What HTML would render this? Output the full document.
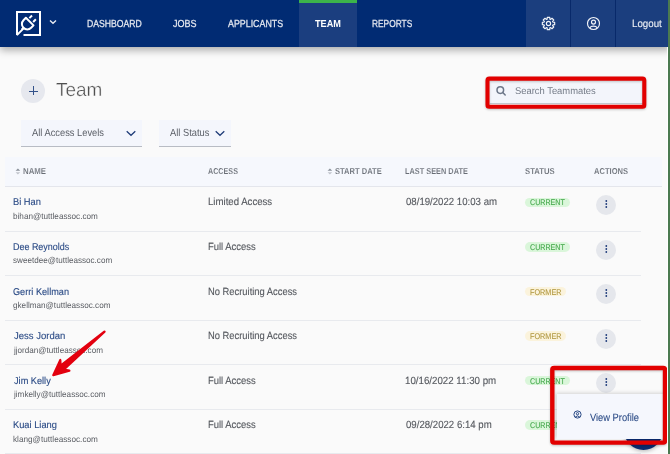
<!DOCTYPE html>
<html><head><meta charset="utf-8"><style>
html,body{margin:0;padding:0;}
body{width:670px;height:454px;overflow:hidden;position:relative;background:#fafafa;font-family:"Liberation Sans", sans-serif;text-rendering:geometricPrecision;}
.t{position:absolute;white-space:nowrap;}
.b{position:absolute;}
</style></head><body>
<div class="b" style="left:0px;top:0px;width:670px;height:46.5px;background:#012b73;box-shadow:0 3px 8px rgba(0,0,0,0.33);z-index:5"></div>
<div class="b" style="left:299px;top:0px;width:58px;height:46.5px;background:#1b3e7f;z-index:6"></div>
<div class="b" style="left:299px;top:0px;width:58px;height:2.5px;background:#3cb44a;z-index:7"></div>
<div class="b" style="left:526px;top:0px;width:144px;height:46.5px;background:#1b3e7e;z-index:6"></div>
<div class="b" style="left:570px;top:0px;width:1px;height:46.5px;background:#08296a;z-index:7"></div>
<div class="b" style="left:615px;top:0px;width:1px;height:46.5px;background:#08296a;z-index:7"></div>
<div class="t" style="left:87.09px;top:19.80px;font-size:10.2px;line-height:10.2px;color:#e6e9f0;font-weight:400;transform:scaleX(0.8483);transform-origin:0 0;-webkit-text-stroke:0.25px #e6e9f0;z-index:8;">DASHBOARD</div>
<div class="t" style="left:173.47px;top:19.80px;font-size:10.2px;line-height:10.2px;color:#e6e9f0;font-weight:400;transform:scaleX(0.8836);transform-origin:0 0;-webkit-text-stroke:0.25px #e6e9f0;z-index:8;">JOBS</div>
<div class="t" style="left:228.48px;top:19.80px;font-size:10.2px;line-height:10.2px;color:#e6e9f0;font-weight:400;transform:scaleX(0.8696);transform-origin:0 0;-webkit-text-stroke:0.25px #e6e9f0;z-index:8;">APPLICANTS</div>
<div class="t" style="left:315.41px;top:19.80px;font-size:10.2px;line-height:10.2px;color:#ffffff;font-weight:700;transform:scaleX(0.8993);transform-origin:0 0;z-index:8;">TEAM</div>
<div class="t" style="left:372.31px;top:19.80px;font-size:10.2px;line-height:10.2px;color:#e6e9f0;font-weight:400;transform:scaleX(0.8198);transform-origin:0 0;-webkit-text-stroke:0.25px #e6e9f0;z-index:8;">REPORTS</div>
<div class="t" style="left:631.8px;top:19.90px;font-size:10.4px;line-height:10.4px;color:#f0f2f6;font-weight:400;transform:scaleX(0.9356);transform-origin:0 0;-webkit-text-stroke:0.1px #f0f2f6;z-index:8;">Logout</div>
<svg class="b" style="left:15px;top:10px;z-index:8" width="27" height="27" viewBox="-1 -1 27 27" fill="none" stroke="#fff" stroke-width="2">
<path d="M7.5 24 H24 V1 H1 V24" stroke-linejoin="miter"/>
<path d="M1.4 23.6 L7.6 17.4" stroke-linecap="round"/>
<g transform="translate(11.3 13.0) rotate(45)">
<path d="M-5.4 -3.4 H5.4 V0 A5.4 5.4 0 0 1 -5.4 0 Z" stroke-linejoin="round"/>
<path d="M-2.7 -5.6 V-9.4 M2.7 -5.6 V-9.4" />
<path d="M0 5.4 V8"/>
</g>
</svg><svg class="b" style="left:49px;top:19px;z-index:8" width="8" height="6" viewBox="0 0 8 6" fill="none" stroke="#e8ebf2" stroke-width="1.4"><path d="M1 1.5 L4 4.3 L7 1.5"/></svg>
<svg class="b" style="left:541px;top:15.5px;z-index:8" width="15" height="15" viewBox="0 0 15 15" fill="none" stroke="#f2f4f8" stroke-width="1.15" stroke-linejoin="round">
<circle cx="7.5" cy="7.5" r="2.1"/>
<path d="M11.89 6.14 L13.67 6.25 L13.67 8.75 L11.89 8.86 L11.57 9.65 L12.75 10.98 L10.98 12.75 L9.65 11.57 L8.86 11.89 L8.75 13.67 L6.25 13.67 L6.14 11.89 L5.35 11.57 L4.02 12.75 L2.25 10.98 L3.43 9.65 L3.11 8.86 L1.33 8.75 L1.33 6.25 L3.11 6.14 L3.43 5.35 L2.25 4.02 L4.02 2.25 L5.35 3.43 L6.14 3.11 L6.25 1.33 L8.75 1.33 L8.86 3.11 L9.65 3.43 L10.98 2.25 L12.75 4.02 L11.57 5.35Z"/>
</svg><svg class="b" style="left:586px;top:15.6px;z-index:8" width="15" height="15" viewBox="0 0 15 15" fill="none" stroke="#f2f4f8" stroke-width="1.15">
<circle cx="7.5" cy="7.5" r="6"/><circle cx="7.5" cy="6.1" r="2"/><path d="M3.9 11.9 C4.8 9.6 10.2 9.6 11.1 11.9"/>
</svg><div class="b" style="left:21px;top:79px;width:24px;height:24px;border-radius:50%;background:#e6e8ee"></div>
<div class="b" style="left:29px;top:90.5px;width:8.6px;height:1px;background:#33528a"></div>
<div class="b" style="left:32.8px;top:86.2px;width:1px;height:8.6px;background:#33528a"></div>
<div class="t" style="left:55.88px;top:81.10px;font-size:19px;line-height:19px;color:#505050;font-weight:400;transform:scaleX(0.9977);transform-origin:0 0;-webkit-text-stroke:0.35px #fafafa;">Team</div>
<div class="b" style="left:489.5px;top:80.7px;width:153px;height:22.3px;background:#f3f5fb;border-bottom:1px solid #c3c7cf"></div>
<svg class="b" style="left:495px;top:84.5px" width="12" height="12" viewBox="0 0 12 12" fill="none" stroke="#6d7789" stroke-width="1.5"><circle cx="5.3" cy="5.1" r="3.3"/><path d="M7.7 7.5 L10.2 10" stroke-linecap="round"/></svg>
<div class="t" style="left:515.29px;top:87.10px;font-size:9.8px;line-height:9.8px;color:#757c88;font-weight:400;transform:scaleX(0.9586);transform-origin:0 0;">Search Teammates</div>
<svg class="b" style="left:0;top:0;z-index:20;filter:drop-shadow(0.5px 1px 1px rgba(0,0,0,0.22))" width="670" height="454"><rect x="487.5" y="78.6" width="156.8" height="28.1" rx="1.8" fill="none" stroke="#e20000" stroke-width="4.1"/><rect x="552.3" y="368" width="112.7" height="74.6" rx="1.8" fill="none" stroke="#e20000" stroke-width="4.4"/></svg>
<div class="b" style="left:21px;top:120px;width:121px;height:25.5px;background:#f4f6fc;border-bottom:1px solid #b8bcc4"></div>
<div class="t" style="left:32.08px;top:129.30px;font-size:10.3px;line-height:10.3px;color:#5c6068;font-weight:400;transform:scaleX(0.9055);transform-origin:0 0;">All Access Levels</div>
<svg class="b" style="left:125px;top:129px" width="12" height="9" viewBox="0 0 12 9" fill="none" stroke="#1f3c78" stroke-width="1.25"><path d="M1.7 2.3 L6 6.3 L10.3 2.3"/></svg>
<div class="b" style="left:159px;top:120px;width:72px;height:25.5px;background:#f4f6fc;border-bottom:1px solid #b8bcc4"></div>
<div class="t" style="left:170.38px;top:129.30px;font-size:10.3px;line-height:10.3px;color:#5c6068;font-weight:400;transform:scaleX(0.9045);transform-origin:0 0;">All Status</div>
<svg class="b" style="left:214.2px;top:129.2px" width="12" height="9" viewBox="0 0 12 9" fill="none" stroke="#1f3c78" stroke-width="1.25"><path d="M1.7 2.3 L6 6.3 L10.3 2.3"/></svg>
<div class="b" style="left:5px;top:157px;width:656.5px;height:29px;background:#f6f8fd;border-bottom:1px solid #e4e6ec"></div>
<svg class="b" style="left:15.3px;top:167.6px" width="6" height="7" viewBox="0 0 6 7"><path d="M0.6 2.7 L2.9 0.4 L5.2 2.7Z" fill="#8a9099"/><path d="M0.6 4.3 L2.9 6.6 L5.2 4.3Z" fill="#c0c4cb"/></svg>
<div class="t" style="left:23.18px;top:167.20px;font-size:8.6px;line-height:8.6px;color:#686d75;font-weight:700;transform:scaleX(0.913);transform-origin:0 0;-webkit-text-stroke:0.12px #f6f8fd;">NAME</div>
<div class="t" style="left:207.83px;top:167.20px;font-size:8.6px;line-height:8.6px;color:#686d75;font-weight:700;transform:scaleX(0.8358);transform-origin:0 0;-webkit-text-stroke:0.12px #f6f8fd;">ACCESS</div>
<svg class="b" style="left:326.8px;top:167.6px" width="6" height="7" viewBox="0 0 6 7"><path d="M0.6 2.7 L2.9 0.4 L5.2 2.7Z" fill="#8a9099"/><path d="M0.6 4.3 L2.9 6.6 L5.2 4.3Z" fill="#c0c4cb"/></svg>
<div class="t" style="left:334.69px;top:167.20px;font-size:8.6px;line-height:8.6px;color:#686d75;font-weight:700;transform:scaleX(0.88);transform-origin:0 0;-webkit-text-stroke:0.12px #f6f8fd;">START DATE</div>
<div class="t" style="left:405.21px;top:167.20px;font-size:8.6px;line-height:8.6px;color:#686d75;font-weight:700;transform:scaleX(0.8564);transform-origin:0 0;-webkit-text-stroke:0.12px #f6f8fd;">LAST SEEN DATE</div>
<div class="t" style="left:524.78px;top:167.20px;font-size:8.6px;line-height:8.6px;color:#686d75;font-weight:700;transform:scaleX(0.8973);transform-origin:0 0;-webkit-text-stroke:0.12px #f6f8fd;">STATUS</div>
<div class="t" style="left:593.62px;top:167.20px;font-size:8.6px;line-height:8.6px;color:#686d75;font-weight:700;transform:scaleX(0.8803);transform-origin:0 0;-webkit-text-stroke:0.12px #f6f8fd;">ACTIONS</div>
<div class="t" style="left:12.99px;top:198.40px;font-size:9.9px;line-height:9.9px;color:#2a4a85;font-weight:400;transform:scaleX(0.9436);transform-origin:0 0;-webkit-text-stroke:0.12px #2a4a85;">Bi Han</div>
<div class="t" style="left:13.18px;top:211.90px;font-size:8.5px;line-height:8.5px;color:#5a5d63;font-weight:400;transform:scaleX(0.959);transform-origin:0 0;">bihan@tuttleassoc.com</div>
<div class="t" style="left:207.71px;top:198.40px;font-size:10.4px;line-height:10.4px;color:#55585e;font-weight:400;transform:scaleX(0.926);transform-origin:0 0;-webkit-text-stroke:0.12px #55585e;">Limited Access</div>
<div class="t" style="left:405.53px;top:198.40px;font-size:10.4px;line-height:10.4px;color:#55585e;font-weight:400;transform:scaleX(0.9266);transform-origin:0 0;-webkit-text-stroke:0.12px #55585e;">08/19/2022 10:03 am</div>
<div class="b" style="left:524.5px;top:197.6px;width:45.8px;height:9.4px;border-radius:5px;background:#daf6da"></div>
<div class="t" style="left:529.94px;top:198.40px;font-size:8.4px;line-height:8.4px;color:#45a84c;font-weight:400;transform:scaleX(0.8503);transform-origin:0 0;-webkit-text-stroke:0.12px #45a84c;">CURRENT</div>
<div class="b" style="left:596.3px;top:195.1px;width:20px;height:20px;border-radius:50%;background:#e5e7ec"></div>
<svg class="b" style="left:602px;top:198.20px" width="9" height="12" viewBox="0 0 9 12"><circle cx="4.3" cy="3.0" r="0.9" fill="#1d3a7a"/><circle cx="4.3" cy="6.0" r="0.9" fill="#1d3a7a"/><circle cx="4.3" cy="9.0" r="0.9" fill="#1d3a7a"/></svg>
<div class="b" style="left:5px;top:231px;width:636px;height:1px;background:#e8eaee"></div>
<div class="t" style="left:13.02px;top:242.95px;font-size:9.9px;line-height:9.9px;color:#2a4a85;font-weight:400;transform:scaleX(0.9059);transform-origin:0 0;-webkit-text-stroke:0.12px #2a4a85;">Dee Reynolds</div>
<div class="t" style="left:13.49px;top:256.45px;font-size:8.5px;line-height:8.5px;color:#5a5d63;font-weight:400;transform:scaleX(0.9526);transform-origin:0 0;">sweetdee@tuttleassoc.com</div>
<div class="t" style="left:207.72px;top:242.95px;font-size:10.4px;line-height:10.4px;color:#55585e;font-weight:400;transform:scaleX(0.909);transform-origin:0 0;-webkit-text-stroke:0.12px #55585e;">Full Access</div>
<div class="b" style="left:524.5px;top:242.15px;width:45.8px;height:9.4px;border-radius:5px;background:#daf6da"></div>
<div class="t" style="left:529.94px;top:242.95px;font-size:8.4px;line-height:8.4px;color:#45a84c;font-weight:400;transform:scaleX(0.8503);transform-origin:0 0;-webkit-text-stroke:0.12px #45a84c;">CURRENT</div>
<div class="b" style="left:596.3px;top:239.65px;width:20px;height:20px;border-radius:50%;background:#e5e7ec"></div>
<svg class="b" style="left:602px;top:242.75px" width="9" height="12" viewBox="0 0 9 12"><circle cx="4.3" cy="3.0" r="0.9" fill="#1d3a7a"/><circle cx="4.3" cy="6.0" r="0.9" fill="#1d3a7a"/><circle cx="4.3" cy="9.0" r="0.9" fill="#1d3a7a"/></svg>
<div class="b" style="left:5px;top:275px;width:636px;height:1px;background:#e8eaee"></div>
<div class="t" style="left:13.3px;top:287.50px;font-size:9.9px;line-height:9.9px;color:#2a4a85;font-weight:400;transform:scaleX(0.9276);transform-origin:0 0;-webkit-text-stroke:0.12px #2a4a85;">Gerri Kellman</div>
<div class="t" style="left:13.36px;top:301.00px;font-size:8.5px;line-height:8.5px;color:#5a5d63;font-weight:400;transform:scaleX(0.9584);transform-origin:0 0;">gkellman@tuttleassoc.com</div>
<div class="t" style="left:207.73px;top:287.50px;font-size:10.4px;line-height:10.4px;color:#55585e;font-weight:400;transform:scaleX(0.9015);transform-origin:0 0;-webkit-text-stroke:0.12px #55585e;">No Recruiting Access</div>
<div class="b" style="left:524.5px;top:286.7px;width:41.8px;height:9.4px;border-radius:5px;background:#fbf3dc"></div>
<div class="t" style="left:529.7px;top:287.50px;font-size:8.4px;line-height:8.4px;color:#b39a45;font-weight:400;transform:scaleX(0.8694);transform-origin:0 0;-webkit-text-stroke:0.12px #b39a45;">FORMER</div>
<div class="b" style="left:596.3px;top:284.2px;width:20px;height:20px;border-radius:50%;background:#e5e7ec"></div>
<svg class="b" style="left:602px;top:287.30px" width="9" height="12" viewBox="0 0 9 12"><circle cx="4.3" cy="3.0" r="0.9" fill="#1d3a7a"/><circle cx="4.3" cy="6.0" r="0.9" fill="#1d3a7a"/><circle cx="4.3" cy="9.0" r="0.9" fill="#1d3a7a"/></svg>
<div class="b" style="left:5px;top:320px;width:636px;height:1px;background:#e8eaee"></div>
<div class="t" style="left:13.63px;top:332.05px;font-size:9.9px;line-height:9.9px;color:#2a4a85;font-weight:400;transform:scaleX(0.9633);transform-origin:0 0;-webkit-text-stroke:0.12px #2a4a85;">Jess Jordan</div>
<div class="t" style="left:13.91px;top:345.55px;font-size:8.5px;line-height:8.5px;color:#5a5d63;font-weight:400;transform:scaleX(0.954);transform-origin:0 0;">jjordan@tuttleassoc.com</div>
<div class="t" style="left:207.73px;top:332.05px;font-size:10.4px;line-height:10.4px;color:#55585e;font-weight:400;transform:scaleX(0.9015);transform-origin:0 0;-webkit-text-stroke:0.12px #55585e;">No Recruiting Access</div>
<div class="b" style="left:524.5px;top:331.25px;width:41.8px;height:9.4px;border-radius:5px;background:#fbf3dc"></div>
<div class="t" style="left:529.7px;top:332.05px;font-size:8.4px;line-height:8.4px;color:#b39a45;font-weight:400;transform:scaleX(0.8694);transform-origin:0 0;-webkit-text-stroke:0.12px #b39a45;">FORMER</div>
<div class="b" style="left:596.3px;top:328.75px;width:20px;height:20px;border-radius:50%;background:#e5e7ec"></div>
<svg class="b" style="left:602px;top:331.85px" width="9" height="12" viewBox="0 0 9 12"><circle cx="4.3" cy="3.0" r="0.9" fill="#1d3a7a"/><circle cx="4.3" cy="6.0" r="0.9" fill="#1d3a7a"/><circle cx="4.3" cy="9.0" r="0.9" fill="#1d3a7a"/></svg>
<div class="b" style="left:5px;top:364px;width:636px;height:1px;background:#e8eaee"></div>
<div class="t" style="left:13.63px;top:376.60px;font-size:9.9px;line-height:9.9px;color:#2a4a85;font-weight:400;transform:scaleX(0.93);transform-origin:0 0;-webkit-text-stroke:0.12px #2a4a85;">Jim Kelly</div>
<div class="t" style="left:13.91px;top:390.10px;font-size:8.5px;line-height:8.5px;color:#5a5d63;font-weight:400;transform:scaleX(0.9578);transform-origin:0 0;">jimkelly@tuttleassoc.com</div>
<div class="t" style="left:207.72px;top:376.60px;font-size:10.4px;line-height:10.4px;color:#55585e;font-weight:400;transform:scaleX(0.909);transform-origin:0 0;-webkit-text-stroke:0.12px #55585e;">Full Access</div>
<div class="t" style="left:405.16px;top:376.60px;font-size:10.4px;line-height:10.4px;color:#55585e;font-weight:400;transform:scaleX(0.9357);transform-origin:0 0;-webkit-text-stroke:0.12px #55585e;">10/16/2022 11:30 pm</div>
<div class="b" style="left:524.5px;top:375.8px;width:45.8px;height:9.4px;border-radius:5px;background:#daf6da"></div>
<div class="t" style="left:529.94px;top:376.60px;font-size:8.4px;line-height:8.4px;color:#45a84c;font-weight:400;transform:scaleX(0.8503);transform-origin:0 0;-webkit-text-stroke:0.12px #45a84c;">CURRENT</div>
<div class="b" style="left:596.3px;top:373.3px;width:20px;height:20px;border-radius:50%;background:#e5e7ec"></div>
<svg class="b" style="left:602px;top:376.40px" width="9" height="12" viewBox="0 0 9 12"><circle cx="4.3" cy="3.0" r="0.9" fill="#1d3a7a"/><circle cx="4.3" cy="6.0" r="0.9" fill="#1d3a7a"/><circle cx="4.3" cy="9.0" r="0.9" fill="#1d3a7a"/></svg>
<div class="b" style="left:5px;top:409px;width:636px;height:1px;background:#e8eaee"></div>
<div class="t" style="left:13.0px;top:421.15px;font-size:9.9px;line-height:9.9px;color:#2a4a85;font-weight:400;transform:scaleX(0.9413);transform-origin:0 0;-webkit-text-stroke:0.12px #2a4a85;">Kuai Liang</div>
<div class="t" style="left:13.16px;top:434.65px;font-size:8.5px;line-height:8.5px;color:#5a5d63;font-weight:400;transform:scaleX(0.9645);transform-origin:0 0;">klang@tuttleassoc.com</div>
<div class="t" style="left:207.72px;top:421.15px;font-size:10.4px;line-height:10.4px;color:#55585e;font-weight:400;transform:scaleX(0.909);transform-origin:0 0;-webkit-text-stroke:0.12px #55585e;">Full Access</div>
<div class="t" style="left:405.53px;top:421.15px;font-size:10.4px;line-height:10.4px;color:#55585e;font-weight:400;transform:scaleX(0.9272);transform-origin:0 0;-webkit-text-stroke:0.12px #55585e;">09/28/2022 6:14 pm</div>
<div class="b" style="left:524.5px;top:420.35px;width:45.8px;height:9.4px;border-radius:5px;background:#daf6da"></div>
<div class="t" style="left:529.94px;top:421.15px;font-size:8.4px;line-height:8.4px;color:#45a84c;font-weight:400;transform:scaleX(0.8503);transform-origin:0 0;-webkit-text-stroke:0.12px #45a84c;">CURRENT</div>
<div class="b" style="left:596.3px;top:417.85px;width:20px;height:20px;border-radius:50%;background:#e5e7ec"></div>
<svg class="b" style="left:602px;top:420.95px" width="9" height="12" viewBox="0 0 9 12"><circle cx="4.3" cy="3.0" r="0.9" fill="#1d3a7a"/><circle cx="4.3" cy="6.0" r="0.9" fill="#1d3a7a"/><circle cx="4.3" cy="9.0" r="0.9" fill="#1d3a7a"/></svg>
<div class="b" style="left:5px;top:453px;width:636px;height:1px;background:#e8eaee"></div>
<div class="b" style="left:624px;top:410.5px;width:39px;height:39px;border-radius:50%;background:#0a2a6e;box-shadow:0 1px 4px rgba(0,0,0,0.3);z-index:12"></div>
<div class="b" style="left:557px;top:394px;width:110px;height:45px;background:#f5f7fd;box-shadow:-1px -1px 4px rgba(0,0,0,0.16);z-index:13"></div>
<svg class="b" style="left:572.8px;top:409.6px;z-index:14" width="9" height="9" viewBox="0 0 9 9" fill="none" stroke="#2a4a85" stroke-width="1"><circle cx="4.5" cy="4.5" r="3.6"/><circle cx="4.5" cy="3.7" r="1.15"/><path d="M2.3 6.9 Q4.5 5 6.7 6.9"/></svg>
<div class="t" style="left:590.06px;top:412.60px;font-size:10.6px;line-height:10.6px;color:#2a4a85;font-weight:400;transform:scaleX(0.8793);transform-origin:0 0;-webkit-text-stroke:0.08px #2a4a85;z-index:14;">View Profile</div>
<div class="b" style="left:668px;top:0px;width:2px;height:454px;background:#4b7a50;z-index:30"></div>
<div class="b" style="left:667px;top:47px;width:1px;height:407px;background:#ffffff;z-index:30"></div>
<svg class="b" style="left:0;top:0;z-index:25" width="670" height="454"><path d="M53.26 375.15 L60.32 359.98 L60.58 365.53 L104.39 331.56 L104.58 331.79 L63.94 369.50 L69.38 370.65Z" fill="#e3000f" stroke="#e3000f" stroke-width="2.2" stroke-linejoin="round"/></svg>

</body></html>
